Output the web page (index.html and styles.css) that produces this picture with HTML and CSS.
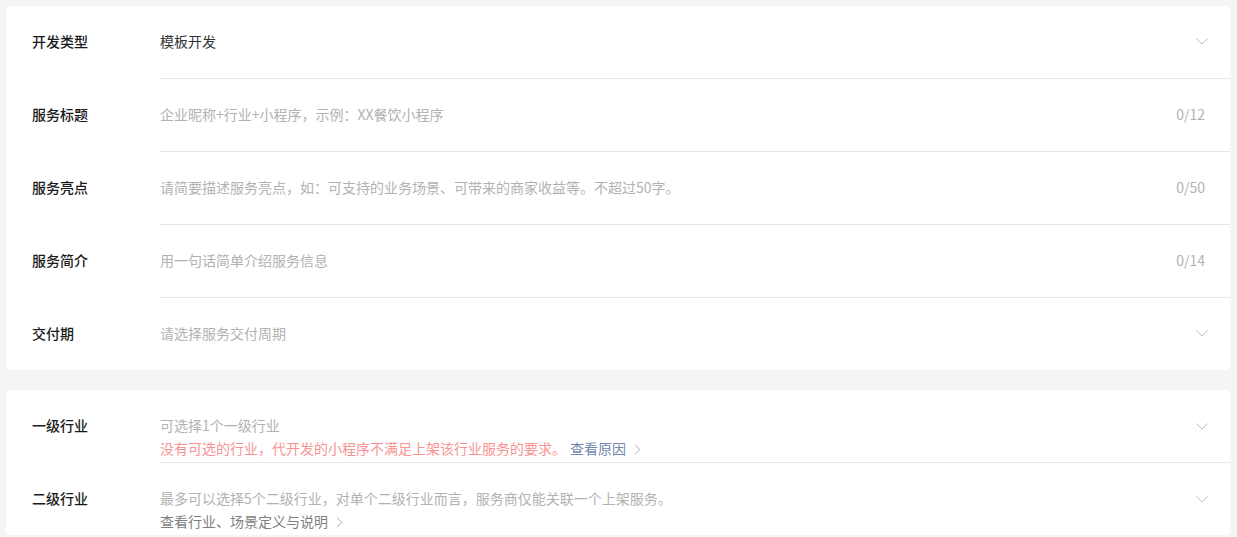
FILE: index.html
```html
<!DOCTYPE html>
<html lang="zh-CN">
<head>
  <meta charset="UTF-8" />
  <title>服务信息</title>
  <link rel="stylesheet" href="styles.css">
</head>
<body>
  <div class="card">
    <div class="row">
      <div class="label">开发类型</div>
      <div class="field">
        <div class="value">模板开发</div>
        <svg class="arrow" width="12" height="7" viewBox="0 0 12 7"><path d="M0.5 0.5 L6 6 L11.5 0.5" fill="none" stroke="#bdbdbd" stroke-width="1"/></svg>
      </div>
    </div>
    <div class="row">
      <div class="label">服务标题</div>
      <div class="field">
        <div class="value placeholder">企业昵称+行业+小程序，示例：XX餐饮小程序</div>
        <span class="count">0/12</span>
      </div>
    </div>
    <div class="row">
      <div class="label">服务亮点</div>
      <div class="field">
        <div class="value placeholder">请简要描述服务亮点，如：可支持的业务场景、可带来的商家收益等。不超过50字。</div>
        <span class="count">0/50</span>
      </div>
    </div>
    <div class="row">
      <div class="label">服务简介</div>
      <div class="field">
        <div class="value placeholder">用一句话简单介绍服务信息</div>
        <span class="count">0/14</span>
      </div>
    </div>
    <div class="row">
      <div class="label">交付期</div>
      <div class="field">
        <div class="value placeholder">请选择服务交付周期</div>
        <svg class="arrow" width="12" height="7" viewBox="0 0 12 7"><path d="M0.5 0.5 L6 6 L11.5 0.5" fill="none" stroke="#bdbdbd" stroke-width="1"/></svg>
      </div>
    </div>
  </div>

  <div class="card">
    <div class="row tall">
      <div class="label">一级行业</div>
      <div class="field">
        <div class="value">
          <div class="placeholder">可选择1个一级行业</div>
          <div class="error">没有可选的行业，代开发的小程序不满足上架该行业服务的要求。<a class="link">查看原因<span class="more"></span></a></div>
        </div>
        <svg class="arrow" width="12" height="7" viewBox="0 0 12 7"><path d="M0.5 0.5 L6 6 L11.5 0.5" fill="none" stroke="#bdbdbd" stroke-width="1"/></svg>
      </div>
    </div>
    <div class="row tall">
      <div class="label">二级行业</div>
      <div class="field">
        <div class="value">
          <div class="placeholder">最多可以选择5个二级行业，对单个二级行业而言，服务商仅能关联一个上架服务。</div>
          <div class="tip">查看行业、场景定义与说明<span class="more"></span></div>
        </div>
        <svg class="arrow" width="12" height="7" viewBox="0 0 12 7"><path d="M0.5 0.5 L6 6 L11.5 0.5" fill="none" stroke="#bdbdbd" stroke-width="1"/></svg>
      </div>
    </div>
  </div>
</body>
</html>
```

FILE: styles.css
```css
body {
  margin: 0;
  padding: 6px 7px 0 6px;
  background-color: #f5f5f5;
  font-family: "Noto Sans CJK SC", "Noto Sans", sans-serif;
  font-size: 14px;
  color: #1a1a1a;
}
.card {
  background: #fff;
  border-radius: 4px;
  padding-left: 26px;
  margin-bottom: 20px;
}
.row {
  display: flex;
  height: 72px;
}
.row + .row .field {
  border-top: 1px solid #e7e7e7;
}
.row + .row {
  height: 73px;
}
.label {
  width: 128px;
  flex-shrink: 0;
  line-height: 70px;
  font-weight: 500;
}
.row + .row .label {
  padding-top: 1px;
}
.field {
  flex: 1;
  display: flex;
  align-items: center;
  padding-right: 25px;
  padding-bottom: 2px;
}
.value {
  flex: 1;
  color: #333;
}
.placeholder {
  color: #b2b2b2;
}
.count {
  color: #b2b2b2;
}
.arrow {
  margin-right: -3px;
  margin-top: 1px;
}
.row.tall {
  height: auto;
}
.row.tall .label {
  line-height: 23px;
  padding-top: 24px;
}
.row.tall + .row.tall .label {
  padding-top: 25px;
}
.row.tall .field {
  align-items: flex-start;
  padding-top: 24px;
  padding-bottom: 2px;
}
.row.tall .value {
  line-height: 23px;
}
.row.tall .arrow {
  margin-top: 9px;
}
.error {
  color: #f99393;
}
.link {
  color: #7385b1;
  margin-left: 4px;
}
.tip {
  color: #7f7f7f;
}
.more {
  display: inline-block;
  width: 6px;
  height: 6px;
  border-top: 1.5px solid #c4c4c4;
  border-right: 1.5px solid #c4c4c4;
  transform: rotate(45deg);
  margin-left: 6px;
  vertical-align: 1px;
}
```
